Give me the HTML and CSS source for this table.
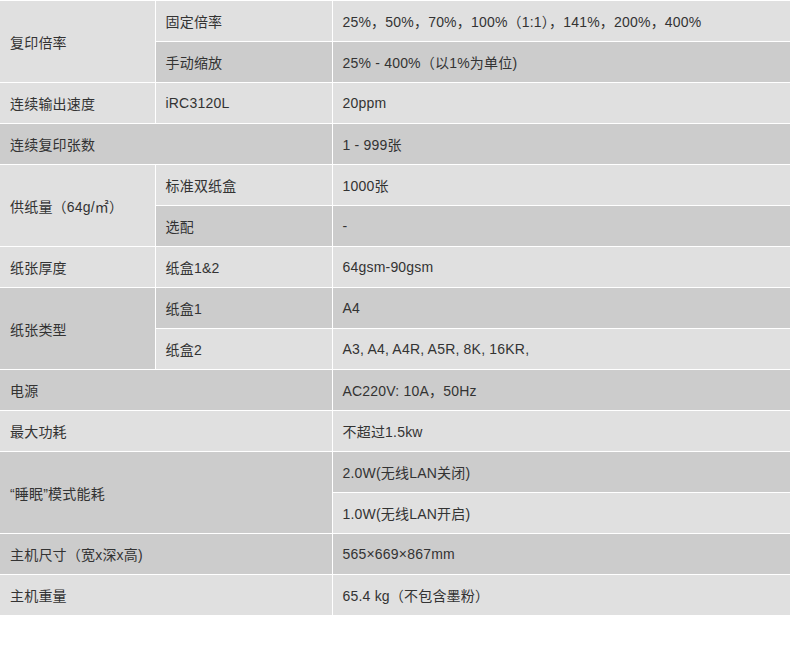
FILE: index.html
```html
<!DOCTYPE html>
<html lang="zh">
<head>
<meta charset="utf-8">
<link rel="stylesheet" href="styles.css">
</head>
<body>
<table class="spec">
  <colgroup><col class="c1"><col class="c2"><col class="c3"></colgroup>
  <tbody>
    <tr><td rowspan="2" class="lt">复印倍率</td><td>固定倍率</td><td>25%，50%，70%，100%（1:1），141%，200%，400%</td></tr>
    <tr><td>手动缩放</td><td>25% - 400%（以1%为单位)</td></tr>
    <tr><td>连续输出速度</td><td>iRC3120L</td><td>20ppm</td></tr>
    <tr><td colspan="2">连续复印张数</td><td>1 - 999张</td></tr>
    <tr><td rowspan="2">供纸量（64g/㎡）</td><td>标准双纸盒</td><td>1000张</td></tr>
    <tr><td>选配</td><td>-</td></tr>
    <tr><td>纸张厚度</td><td>纸盒1&amp;2</td><td>64gsm-90gsm</td></tr>
    <tr><td rowspan="2">纸张类型</td><td>纸盒1</td><td>A4</td></tr>
    <tr><td>纸盒2</td><td>A3, A4, A4R, A5R, 8K, 16KR,</td></tr>
    <tr><td colspan="2">电源</td><td>AC220V: 10A，50Hz</td></tr>
    <tr><td colspan="2">最大功耗</td><td>不超过1.5kw</td></tr>
    <tr><td colspan="2" rowspan="2">“睡眠”模式能耗</td><td>2.0W(无线LAN关闭)</td></tr>
    <tr><td>1.0W(无线LAN开启)</td></tr>
    <tr><td colspan="2">主机尺寸（宽x深x高)</td><td>565×669×867mm</td></tr>
    <tr><td colspan="2">主机重量</td><td>65.4 kg（不包含墨粉）</td></tr>
  </tbody>
</table>
</body>
</html>
```
FILE: styles.css
```css
html, body {
  margin: 0;
  padding: 0;
  background: #fff;
}
body {
  padding-top: 1px;
  font-family: "Liberation Sans", "Noto Sans CJK SC", sans-serif;
  font-size: 14px;
  color: #333;
}
.spec {
  width: 790px;
  border-collapse: collapse;
  border-style: hidden;
  table-layout: fixed;
}
.c1 { width: 155px; }
.c2 { width: 177px; }
.c3 { width: 458px; }
.spec td {
  border: 1px solid #fff;
  height: 40px;
  padding: 0 10px;
  vertical-align: middle;
  white-space: nowrap;
  letter-spacing: 0.2px;
}
.spec tr:nth-child(odd) td { background: #e0e0e0; }
.spec tr:nth-child(even) td { background: #cccccc; }
```
